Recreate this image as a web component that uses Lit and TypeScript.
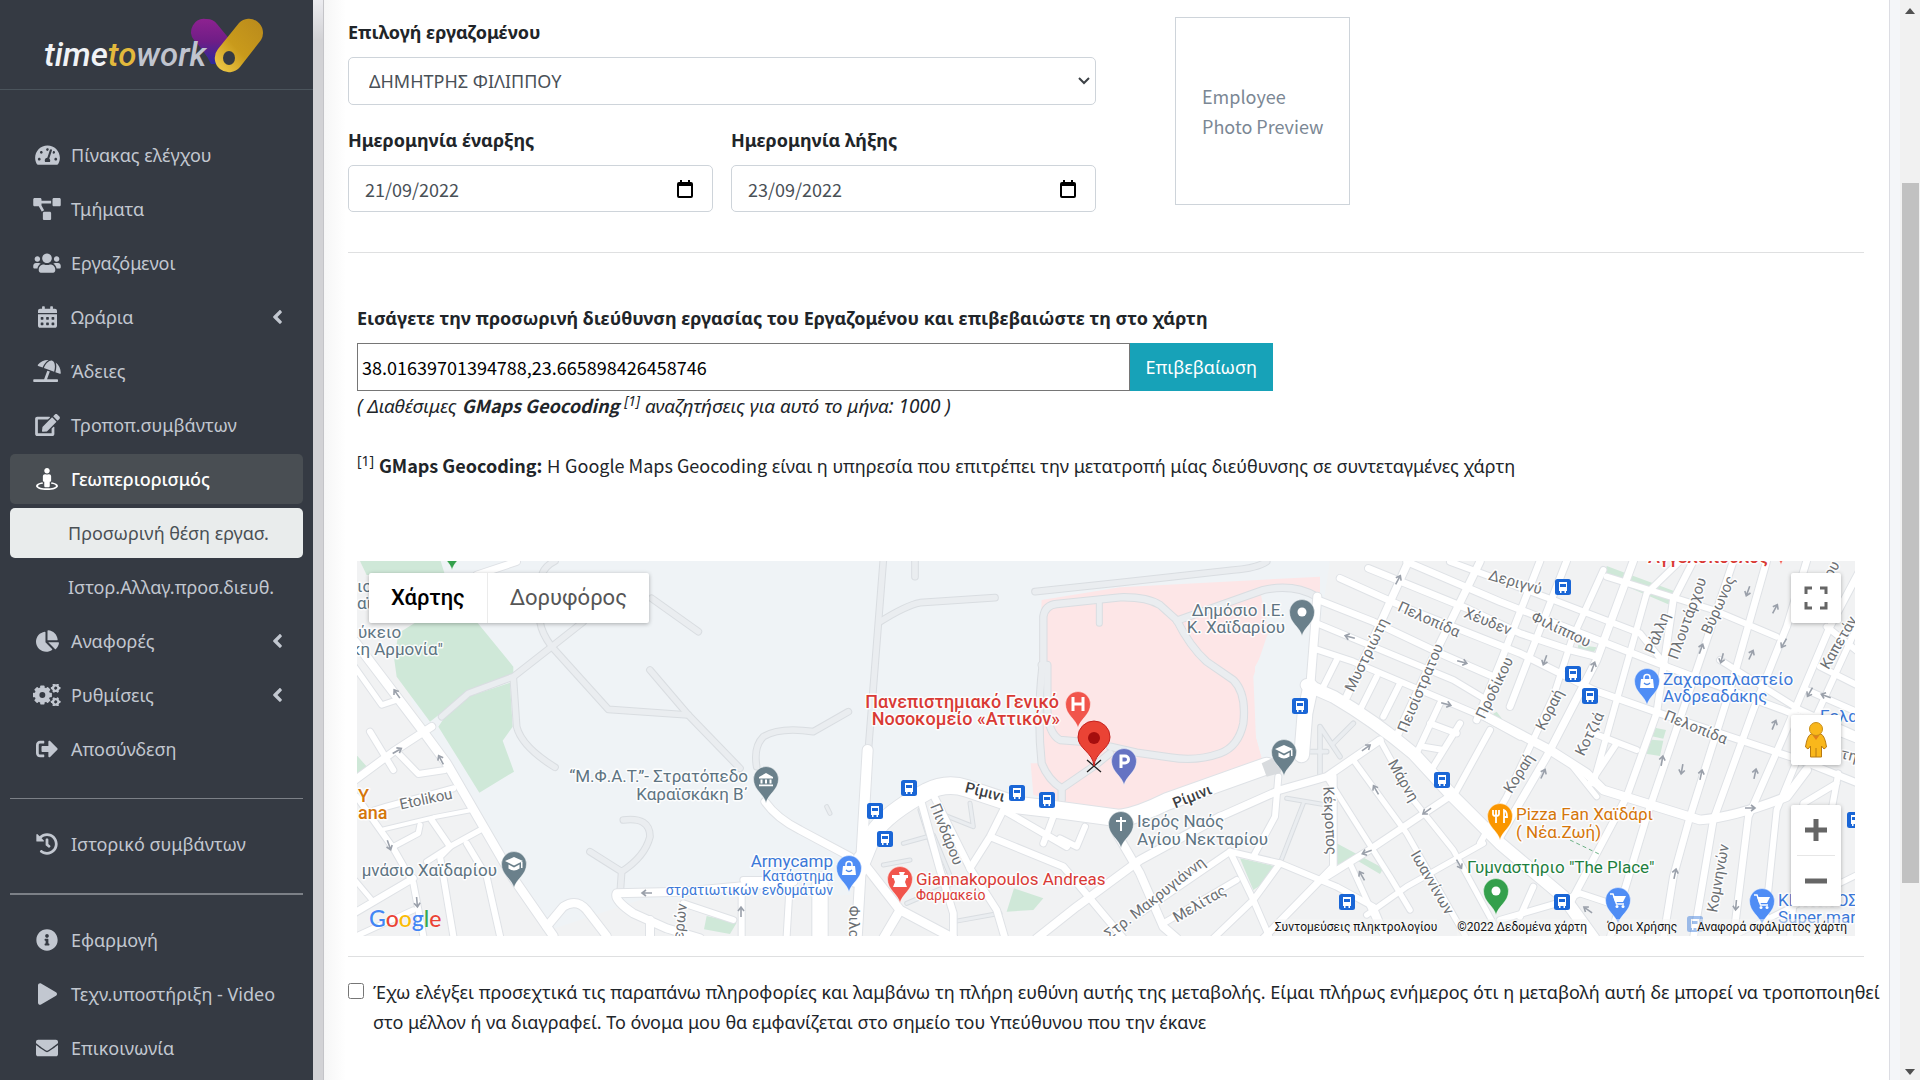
import { LitElement, html, svg, css } from "lit";
import { customElement, state } from "lit/decorators.js";
import { classMap } from "lit/directives/class-map.js";

/* ------------------------------------------------------------------ icons */

type Glyph = { w: number; d: string };

const GLYPHS: Record<string, Glyph> = {
  gauge: { w: 576, d: "M288 32C128.94 32 0 160.94 0 320c0 52.8 14.25 102.26 39.06 144.8 5.61 9.62 16.3 15.2 27.44 15.2h443c11.14 0 21.83-5.58 27.44-15.2C561.75 422.26 576 372.8 576 320c0-159.06-128.94-288-288-288zm0 64c14.71 0 26.58 10.13 30.32 23.65-1.11 2.26-2.64 4.23-3.45 6.67l-9.22 27.67c-5.13 3.49-10.97 6.01-17.64 6.01-17.67 0-32-14.33-32-32S270.33 96 288 96zM96 384c-17.67 0-32-14.33-32-32s14.33-32 32-32 32 14.33 32 32-14.33 32-32 32zm48-160c-17.67 0-32-14.33-32-32s14.33-32 32-32 32 14.33 32 32-14.33 32-32 32zm246.77-72.41l-61.33 184C343.13 347.33 352 364.54 352 384c0 11.72-3.38 22.55-8.88 32H232.88c-5.5-9.45-8.88-20.28-8.88-32 0-33.94 26.5-61.43 59.9-63.59l61.34-184.01c4.17-12.56 17.73-19.45 30.36-15.17 12.57 4.19 19.35 17.79 15.17 30.36zm14.66 57.2l15.52-46.55c3.47-1.29 7.13-2.23 11.05-2.23 17.67 0 32 14.33 32 32s-14.33 32-32 32c-11.38-.01-20.89-6.28-26.57-15.22zM480 384c-17.67 0-32-14.33-32-32s14.33-32 32-32 32 14.33 32 32-14.33 32-32 32z" },
  diagram: { w: 640, d: "M384 320H256c-17.67 0-32 14.33-32 32v128c0 17.67 14.33 32 32 32h128c17.67 0 32-14.33 32-32V352c0-17.67-14.33-32-32-32zM192 32c0-17.67-14.33-32-32-32H32C14.33 0 0 14.33 0 32v128c0 17.67 14.33 32 32 32h95.72l73.16 128.04C211.98 300.98 232.4 288 256 288h.28L192 175.51V128h224V64H192V32zM608 0H480c-17.67 0-32 14.33-32 32v128c0 17.67 14.33 32 32 32h128c17.67 0 32-14.33 32-32V32c0-17.67-14.33-32-32-32z" },
  users: { w: 640, d: "M96 224c35.3 0 64-28.7 64-64s-28.7-64-64-64-64 28.7-64 64 28.7 64 64 64zm448 0c35.3 0 64-28.7 64-64s-28.7-64-64-64-64 28.7-64 64 28.7 64 64 64zm32 32h-64c-17.6 0-33.5 7.1-45.1 18.6 40.3 22.1 68.9 62 75.1 109.4h66c17.7 0 32-14.3 32-32v-32c0-35.3-28.7-64-64-64zm-256 0c61.9 0 112-50.1 112-112S381.9 32 320 32 208 82.1 208 144s50.1 112 112 112zm76.8 32h-8.3c-20.8 10-43.9 16-68.5 16s-47.6-6-68.5-16h-8.3C179.6 288 128 339.6 128 403.2V432c0 26.5 21.5 48 48 48h288c26.5 0 48-21.5 48-48v-28.8c0-63.6-51.6-115.2-115.2-115.2zm-223.7-13.4C161.5 263.1 145.6 256 128 256H64c-35.3 0-64 28.7-64 64v32c0 17.7 14.3 32 32 32h65.9c6.3-47.4 34.9-87.3 75.2-109.4z" },
  calendar: { w: 448, d: "M0 464c0 26.5 21.5 48 48 48h352c26.5 0 48-21.5 48-48V192H0v272zm320-196c0-6.6 5.4-12 12-12h40c6.6 0 12 5.4 12 12v40c0 6.6-5.4 12-12 12h-40c-6.6 0-12-5.4-12-12v-40zm0 128c0-6.6 5.4-12 12-12h40c6.6 0 12 5.4 12 12v40c0 6.6-5.4 12-12 12h-40c-6.6 0-12-5.4-12-12v-40zM192 268c0-6.6 5.4-12 12-12h40c6.6 0 12 5.4 12 12v40c0 6.6-5.4 12-12 12h-40c-6.6 0-12-5.4-12-12v-40zm0 128c0-6.6 5.4-12 12-12h40c6.6 0 12 5.4 12 12v40c0 6.6-5.4 12-12 12h-40c-6.6 0-12-5.4-12-12v-40zM64 268c0-6.6 5.4-12 12-12h40c6.6 0 12 5.4 12 12v40c0 6.6-5.4 12-12 12H76c-6.6 0-12-5.4-12-12v-40zm0 128c0-6.6 5.4-12 12-12h40c6.6 0 12 5.4 12 12v40c0 6.6-5.4 12-12 12H76c-6.6 0-12-5.4-12-12v-40zM400 64h-48V16c0-8.8-7.2-16-16-16h-32c-8.8 0-16 7.2-16 16v48H160V16c0-8.8-7.2-16-16-16h-32c-8.8 0-16 7.2-16 16v48H48C21.5 64 0 85.5 0 112v48h448v-48c0-26.5-21.5-48-48-48z" },
  beach: { w: 640, d: "M115.38 136.9l102.11 37.18c35.19-81.54 86.21-144.29 139-173.7-95.88-4.89-188.78 36.96-248.53 111.8-6.69 8.4-2.66 21.05 7.42 24.72zm132.25 48.16l238.48 86.83c35.76-121.38 18.7-231.66-42.63-253.98-7.4-2.7-15.13-4-23.09-4-58.02.01-128.27 69.17-172.76 171.15zM521.48 60.5c6.22 16.3 10.83 34.6 13.2 55.19 5.74 49.89-1.42 108.23-18.95 166.98l102.62 37.36c10.09 3.67 21.31-3.43 21.57-14.17 2.32-95.69-41.91-187.44-118.44-245.36zM560 447.98H321.06L386 269.5l-60.14-21.9-72.9 200.37H16c-8.84 0-16 7.16-16 16.01v32.01C0 504.83 7.16 512 16 512h544c8.84 0 16-7.17 16-16.01v-32.01c0-8.84-7.16-16-16-16z" },
  edit: { w: 576, d: "M402.6 83.2l90.2 90.2c3.8 3.8 3.8 10 0 13.8L274.4 405.6l-92.8 10.3c-12.4 1.4-22.9-9.1-21.5-21.5l10.3-92.8L388.8 83.2c3.8-3.8 10-3.8 13.8 0zm162-22.9l-48.8-48.8c-15.2-15.2-39.9-15.2-55.2 0l-35.4 35.4c-3.8 3.8-3.8 10 0 13.8l90.2 90.2c3.8 3.8 10 3.8 13.8 0l35.4-35.4c15.2-15.3 15.2-40 0-55.2zM384 346.2V448H64V128h229.8c3.2 0 6.2-1.3 8.5-3.5l40-40c7.6-7.6 2.2-20.5-8.5-20.5H48C21.5 64 0 85.5 0 112v352c0 26.5 21.5 48 48 48h352c26.5 0 48-21.5 48-48V306.2c0-10.7-12.9-16-20.5-8.5l-40 40c-2.2 2.3-3.5 5.3-3.5 8.5z" },
  person: { w: 512, d: "M367.9 329.76c-4.62 5.3-9.78 10.1-15.9 13.65v22.94c66.52 9.34 112 28.05 112 49.65 0 30.93-93.12 56-208 56S48 446.93 48 416c0-21.6 45.48-40.3 112-49.65v-22.94c-6.12-3.55-11.28-8.35-15.9-13.65C58.87 345.34 0 378.05 0 416c0 53.02 114.62 96 256 96s256-42.98 256-96c0-37.95-58.87-70.66-144.1-86.24zM256 128c35.35 0 64-28.65 64-64S291.35 0 256 0s-64 28.65-64 64 28.65 64 64 64zm-64 192v96c0 17.67 14.33 32 32 32h64c17.67 0 32-14.33 32-32v-96c17.67 0 32-14.33 32-32v-96c0-26.51-21.49-48-48-48h-11.8c-11.07 5.03-23.26 8-36.2 8s-25.13-2.97-36.2-8H208c-26.51 0-48 21.49-48 48v96c0 17.67 14.33 32 32 32z" },
  pie: { w: 544, d: "M527.79 288H290.5l158.03 158.03c6.04 6.04 15.98 6.53 22.19.68 38.7-36.46 65.32-85.61 73.13-140.86 1.34-9.46-6.51-17.85-16.06-17.85zm-15.83-64.8C503.72 103.74 408.26 8.28 288.8.04 279.68-.59 272 7.1 272 16.24V240h223.77c9.14 0 16.82-7.68 16.19-16.8zM224 288V50.71c0-9.55-8.39-17.4-17.84-16.06C86.99 51.49-4.1 155.6.14 280.37 4.5 408.51 114.83 513.59 243.03 511.98c50.4-.63 96.97-16.87 135.26-44.03 7.9-5.6 8.42-17.23 1.57-24.08L224 288z" },
  signout: { w: 512, d: "M497 273L329 441c-15 15-41 4.5-41-17v-96H152c-13.3 0-24-10.7-24-24v-96c0-13.3 10.7-24 24-24h136V88c0-21.4 25.9-32 41-17l168 168c9.3 9.4 9.3 24.6 0 34zM192 436v-40c0-6.6-5.4-12-12-12H96c-17.7 0-32-14.3-32-32V160c0-17.7 14.3-32 32-32h84c6.6 0 12-5.4 12-12V76c0-6.6-5.4-12-12-12H96c-53 0-96 43-96 96v192c0 53 43 96 96 96h84c6.6 0 12-5.4 12-12z" },
  history: { w: 512, d: "M504 255.531c.253 136.64-111.18 248.372-247.82 248.468-59.015.042-113.223-20.53-155.822-54.911-11.077-8.94-11.905-25.541-1.839-35.607l11.267-11.267c8.609-8.609 22.353-9.551 31.891-1.984C173.062 425.135 212.781 440 256 440c101.705 0 184-82.311 184-184 0-101.705-82.311-184-184-184-48.814 0-93.149 18.969-126.068 49.932l50.754 50.754c10.08 10.08 2.941 27.314-11.313 27.314H24c-8.837 0-16-7.163-16-16V38.627c0-14.254 17.234-21.393 27.314-11.314l49.372 49.372C129.209 34.136 189.552 8 256 8c136.81 0 247.747 110.78 248 247.531zm-180.912 78.784l9.823-12.63c8.138-10.463 6.253-25.542-4.21-33.679L288 256.349V152c0-13.255-10.745-24-24-24h-16c-13.255 0-24 10.745-24 24v135.651l65.409 50.874c10.463 8.137 25.541 6.253 33.679-4.21z" },
  info: { w: 512, d: "M256 8C119.043 8 8 119.083 8 256c0 136.997 111.043 248 248 248s248-111.003 248-248C504 119.083 392.957 8 256 8zm0 110c23.196 0 42 18.804 42 42s-18.804 42-42 42-42-18.804-42-42 18.804-42 42-42zm56 254c0 6.627-5.373 12-12 12h-88c-6.627 0-12-5.373-12-12v-24c0-6.627 5.373-12 12-12h12v-64h-12c-6.627 0-12-5.373-12-12v-24c0-6.627 5.373-12 12-12h64c6.627 0 12 5.373 12 12v100h12c6.627 0 12 5.373 12 12v24z" },
  play: { w: 448, d: "M424.4 214.7L72.4 6.6C43.8-10.3 0 6.1 0 47.9V464c0 37.5 40.7 60.1 72.4 41.3l352-208c31.4-18.5 31.5-64.1 0-82.6z" },
  envelope: { w: 512, d: "M502.3 190.8c3.9-3.1 9.7-.2 9.7 4.7V400c0 26.5-21.5 48-48 48H48c-26.5 0-48-21.5-48-48V195.6c0-5 5.7-7.8 9.7-4.7 22.4 17.4 52.1 39.5 154.1 113.6 21.1 15.4 56.7 47.8 92.2 47.6 35.7.3 72-32.8 92.3-47.6 102-74.1 131.6-96.3 154-113.7zM256 320c23.2.4 56.6-29.2 73.4-41.4 132.7-96.3 142.8-104.7 173.4-128.7 5.8-4.5 9.2-11.5 9.2-18.9v-19c0-26.5-21.5-48-48-48H48c-26.5 0-48 21.5-48 48v19c0 7.4 3.4 14.3 9.2 18.9 30.6 23.9 40.7 32.4 173.4 128.7 16.8 12.2 50.2 41.8 73.4 41.4z" },
  angle: { w: 256, d: "M31.7 239l136-136c9.4-9.4 24.6-9.4 33.9 0l22.6 22.6c9.4 9.4 9.4 24.6 0 33.9L127.9 256l96.4 96.4c9.4 9.4 9.4 24.6 0 33.9L201.7 409c-9.4 9.4-24.6 9.4-33.9 0l-136-136c-9.5-9.4-9.5-24.6-.1-34z" },
};

/** A cogwheel: a thick ring with `teeth` square teeth around it. */
function gear(cx: number, cy: number, r: number, teeth: number, turn: number) {
  const tooth = r * 0.46;
  return svg`<g transform="translate(${cx} ${cy}) rotate(${turn})">
    <circle r=${r * 0.56} fill="none" stroke="currentColor" stroke-width=${r * 0.5}></circle>
    ${Array.from({ length: teeth }, (_, i) => svg`<rect x=${-tooth / 2} y=${-r} width=${tooth} height=${r * 0.35}
      rx=${r * 0.08} fill="currentColor" transform="rotate(${(i * 360) / teeth})"></rect>`)}
  </g>`;
}

function icon(name: string) {
  if (name === "cogs") {
    return html`<svg class="glyph" width="28" height="22" viewBox="0 0 640 512" aria-hidden="true">
      ${gear(212, 256, 222, 8, 0)}${gear(522, 96, 112, 6, 30)}${gear(522, 416, 112, 6, 30)}
    </svg>`;
  }
  const g = GLYPHS[name];
  return html`<svg class="glyph" width=${Math.round((g.w * 22) / 512)} height="22" viewBox="0 0 ${g.w} 512" aria-hidden="true">
    <path fill="currentColor" d=${g.d}></path>
  </svg>`;
}

/* ---------------------------------------------------------------- sidebar */

type Entry = { label: string; icon?: string; more?: boolean; kind?: "open" | "current" };

const GROUPS: Entry[][] = [
  [
    { label: "Πίνακας ελέγχου", icon: "gauge" },
    { label: "Τμήματα", icon: "diagram" },
    { label: "Εργαζόμενοι", icon: "users" },
    { label: "Ωράρια", icon: "calendar", more: true },
    { label: "Άδειες", icon: "beach" },
    { label: "Τροποπ.συμβάντων", icon: "edit" },
    { label: "Γεωπεριορισμός", icon: "person", kind: "open" },
    { label: "Προσωρινή θέση εργασ.", kind: "current" },
    { label: "Ιστορ.Αλλαγ.προσ.διευθ." },
    { label: "Αναφορές", icon: "pie", more: true },
    { label: "Ρυθμίσεις", icon: "cogs", more: true },
    { label: "Αποσύνδεση", icon: "signout" },
  ],
  [{ label: "Ιστορικό συμβάντων", icon: "history" }],
  [
    { label: "Εφαρμογή", icon: "info" },
    { label: "Τεχν.υποστήριξη - Video", icon: "play" },
    { label: "Επικοινωνία", icon: "envelope" },
  ],
];

@customElement("side-nav")
class SideNav extends LitElement {
  static styles = css`
    :host { display: block; background: #353a43; color: #c2c7d0; }
    .brand { display: block; height: 89px; border-bottom: 1px solid #4b545c; }
    .brand svg { display: block; }
    .word { font: italic 500 33px "Roboto", "Liberation Sans", sans-serif; }
    nav { padding: 40px 10px 6px; }
    ul { list-style: none; margin: 0; padding: 0; }
    ul + ul { border-top: 1px solid #7c8087; margin-top: 24px; padding-top: 20px; }
    ul + ul + ul { border-top-width: 2px; }
    li { margin-bottom: 4px; }
    nav a {
      display: flex; align-items: center; height: 50px; padding: 0 20px 0 18px; border-radius: 5px;
      color: inherit; text-decoration: none; line-height: 30px; white-space: nowrap; box-sizing: border-box;
    }
    .slot { width: 38px; margin-right: 5px; display: flex; justify-content: center; }
    .label { flex: 1; }
    nav .sub { padding-left: 58px; padding-right: 0; }
    nav .open { background: #494e53; color: #fff; font-weight: 500; }
    nav .current { background: #e9ecec; color: #4a5055; }
  `;

  render() {
    return html`
      <a class="brand" href="#home" aria-label="timetowork">
        <svg width="312" height="89" viewBox="0 0 312 89">
          <defs>
            <linearGradient id="violet" x1="0" y1="0" x2="0" y2="1">
              <stop offset="0" stop-color="#8d2290"></stop><stop offset="0.5" stop-color="#6f1d86"></stop><stop offset="1" stop-color="#2b2a9c"></stop>
            </linearGradient>
            <linearGradient id="gold" x1="1" y1="0" x2="0" y2="1">
              <stop offset="0" stop-color="#b98a1c"></stop><stop offset="0.55" stop-color="#c99a1b"></stop><stop offset="1" stop-color="#f3cf4e"></stop>
            </linearGradient>
          </defs>
          <path d="M206 19a13 13 0 0 1 11 5l14 17-13 23h-7c-4-9-10-16-17-24a13 13 0 0 1 12-21z" fill="url(#violet)"></path>
          <path fill="url(#gold)" d="M218 49l21-26a14 14 0 0 1 22 17l-21 27a14 14 0 0 1-22-18z"></path>
          <ellipse cx="229" cy="58" rx="6" ry="7" fill="#353a43"></ellipse>
          <text class="word" x="44" y="66" fill="#f1f3f6">time<tspan fill="#e3b93c">to</tspan><tspan fill="#c0c4ce">work</tspan></text>
        </svg>
      </a>
      <nav aria-label="Κύριο μενού">
        ${GROUPS.map((group) => html`<ul>${group.map((e) => html`<li>
          <a href="#" class=${classMap({ sub: !e.icon, open: e.kind === "open", current: e.kind === "current" })}>
            ${e.icon ? html`<span class="slot">${icon(e.icon)}</span>` : ""}
            <span class="label">${e.label}</span>
            ${e.more ? icon("angle") : ""}
          </a></li>`)}</ul>`)}
      </nav>`;
  }
}

/* -------------------------------------------------------------------- map */

/* Street geometry is kept in four tiles, in thirds of a map unit. */
const TILE: Record<string, string> = {
  a: "translate(350 550) scale(.33333)",
  b: "translate(740 550) scale(.33333)",
  c: "translate(1120 550) scale(.33333)",
  d: "translate(1500 550) scale(.33333)",
};

type Road = [tile: string, width: number, d: string];

const PATHS: Road[] = [
  ["a", 20, "M700 215L605 290L490 380L355 430L275 500"],
  ["a", 20, "M570 215Q575 250 605 290L775 478L1015 495"],
  ["a", 20, "M900 360L1015 495L1170 655"],
  ["a", 20, "M490 385L500 530Q515 590 615 652"],
  ["a", 20, "M905 145L1045 245"],
  ["a", 20, "M575 80Q580 50 615 33"],
  ["a", 20, "M820 810Q900 800 900 860Q885 920 815 965L720 905M815 965L810 1035"],
  ["b", 20, "M430 30L415 220L385 600"],
  ["b", 20, "M420 215Q500 165 540 158L765 143"],
  ["b", 20, "M885 125L1140 98L1480 60Q1550 55 1580 35"],
  ["b", 20, "M525 33V80"],
  ["b", 20, "M50 650Q40 590 70 560Q120 530 220 545L325 485"],
  ["b", 22, "M910 345L910 200Q915 165 950 162L1140 142Q1220 140 1260 165L1310 210Q1350 290 1400 335L1480 390Q1520 430 1510 520Q1495 590 1440 610Q1370 635 1290 622L1190 608L1110 590"],
  ["b", 22, "M1020 575L960 570Q925 550 922 480V345H905"],
  ["b", 22, "M908 345Q890 500 905 640Q925 690 965 715L1060 650L1110 610M965 715V750"],
  ["b", 18, "M1078 158V220"],
  ["c", 22, "M170 212L430 120Q520 100 590 140"],
  ["c", 14, "M600 690L600 530L660 620M570 605H620M640 580L700 520"],
  ["c", 12, "M500 745L620 765M550 760L480 940"],
  ["b", 12, "M430 945L510 930M600 790L700 830L690 760M490 880L580 855L640 1000L500 1060M540 780L600 970M640 1115L780 1090M260 770L270 790"],
];

const STREETS: Road[] = [
  ["a", 26, "M15 275L220 545L290 640L400 830L490 985L610 1158"],
  ["a", 16, "M10 345L95 465L140 450"],
  ["a", 22, "M15 690L130 605L245 530"],
  ["a", 18, "M60 545L130 660"],
  ["a", 18, "M145 610L205 672L285 660"],
  ["a", 18, "M45 790L110 770L310 715"],
  ["a", 12, "M100 838L250 802L365 780"],
  ["a", 18, "M20 740L130 895L190 1000L220 1158"],
  ["a", 16, "M130 890L205 850L210 825"],
  ["a", 18, "M245 810L300 890L270 920L310 1158"],
  ["a", 16, "M400 835L300 890L230 935"],
  ["a", 18, "M350 880L410 980L450 1158"],
  ["a", 20, "M15 1088L190 985"],
  ["a", 14, "M15 990L70 1055"],
  ["a", 16, "M15 1160L190 1080"],
  ["a", 24, "M590 1130L640 1070Q680 1045 710 1080L770 1158"],
  ["a", 24, "M1330 995L1000 1025L800 1030Q790 1050 850 1090L950 1135L1050 1165M900 1110V1158"],
  ["a", 18, "M1000 1060L1150 1110M1175 1020V1158"],
  ["a", 20, "M380 75L500 35"],
  ["b", 30, "M383 600L350 1165"],
  ["b", 22, "M75 755Q110 805 180 840L330 920"],
  ["b", 50, "M345 985Q380 900 400 850Q440 790 560 725Q620 695 680 715L830 765L940 778L1140 805Q1200 795 1280 755L1580 648"],
  ["b", 26, "M355 920L480 1080L640 1165M480 1080L430 1165"],
  ["b", 20, "M580 735L690 955L770 1080L795 1165"],
  ["b", 20, "M600 960L640 1090V1165M545 760L600 960"],
  ["b", 20, "M690 955L750 860L790 780L980 890M750 860L970 950L1150 1165"],
  ["b", 18, "M940 800L910 880M960 865L1010 890L1035 830"],
  ["b", 24, "M1130 850L1200 970L1270 1130L1310 1165"],
  ["b", 24, "M1440 800L1200 930L1010 1070L890 1165"],
  ["b", 46, "M240 990V1165"],
  ["b", 18, "M10 990H150L140 1158"],
  ["c", 44, "M545 615L555 490L572 410"],
  ["c", 24, "M570 420L592 140"],
  ["c", 36, "M560 405L640 440Q760 510 880 610L1000 740L1140 880L1330 1040L1420 1165"],
  ["c", 22, "M300 800L480 720L620 680L780 570"],
  ["c", 18, "M475 680L465 800L400 920"],
  ["c", 20, "M640 680V950L430 1165"],
  ["c", 18, "M330 905L480 940L650 1010L760 1070L800 1165"],
  ["c", 18, "M330 905L400 1050L450 1165M480 940L400 1050L280 1165M330 905L60 1090M350 990L130 1120"],
  ["c", 20, "M620 980L740 905L980 745"],
  ["c", 16, "M700 630L860 850L1040 1165M620 680L810 980L870 1080M780 570L880 750L1000 900L1120 1120"],
  ["c", 16, "M740 1095L860 1010L1090 880M690 940L790 1158"],
  ["c", 20, "M860 35L1140 155L1640 350L1990 480L2215 570"],
  ["c", 20, "M745 55L1040 175L1200 250L1350 300L1430 320"],
  ["c", 20, "M660 85L860 175L1200 310L1420 420L1620 490L2040 630L2215 700"],
  ["c", 20, "M595 150L760 215L960 310L1120 380"],
  ["c", 18, "M590 220L1000 390L1100 450"],
  ["c", 18, "M580 295L700 335L1100 505L1200 560"],
  ["c", 18, "M990 35L1300 150L1560 250L1640 350"],
  ["c", 26, "M1100 500L1290 600L1400 670L1450 720L1740 810Q1850 800 2000 740L2060 660"],
  ["c", 18, "M610 410L650 330M720 480L770 380M790 500L840 400M890 610L960 460M940 650L1020 520M1000 740L1110 540M930 520L1010 550M910 590L970 600"],
  ["c", 22, "M680 440L740 310L865 35"],
  ["c", 22, "M830 560L960 280L1080 35"],
  ["c", 20, "M1070 510L1140 340L1260 33"],
  ["d", 20, "M30 470L80 340L200 33"],
  ["d", 18, "M-60 880L20 740L160 440L215 270L310 60"],
  ["d", 22, "M0 860L140 620L290 330L400 33"],
  ["d", 18, "M280 700L440 130L540 33M350 580L270 700"],
  ["d", 20, "M210 1060L380 740L470 490L520 150L580 33"],
  ["d", 20, "M330 1165L440 800L600 330L700 33"],
  ["d", 20, "M490 1165L520 980L570 800L690 420L800 33"],
  ["d", 20, "M580 1165L640 810L760 480L860 230L920 33"],
  ["d", 20, "M700 1165L745 800L850 560L990 230L1080 60"],
  ["d", 18, "M790 1165L830 780L920 560L1080 210"],
  ["d", 18, "M870 1165L910 760L1010 700M1015 670L980 860"],
  ["d", 18, "M320 80L640 180L830 260"],
  ["d", 18, "M660 330L900 480L1080 560M920 420L1080 490M980 230L1080 310M960 350L1080 410"],
  ["d", 18, "M280 550L410 600M0 1110L170 1060L240 1030L330 1060M100 1010L60 1100"],
  ["d", 16, "M210 640L290 740M700 1158L1080 970"],
];

const GREENS: [string, string][] = [
  ["a", "30,33 272,33 285,75 50,75"],
  ["a", "200,215 380,215 490,350 490,378 355,425 240,515 140,380 133,330 145,250"],
  ["a", "265,530 285,500 360,438 480,398 488,530 458,572 492,665 388,728"],
  ["a", "15,610 55,655 15,695"],
  ["a", "1070,1098 1160,1118 1140,1152 1062,1138"],
  ["b", "822,1015 910,1045 880,1080 800,1085"],
  ["c", "650,880 790,955 780,972 700,925 650,945"],
  ["c", "360,925 470,950 430,1000 400,1020"],
  ["c", "1105,500 1130,485 1160,525 1140,535"],
  ["d", "320,48 540,130 510,165 315,82"],
  ["d", "235,285 290,292 275,318 232,300"],
  ["d", "440,568 490,572 480,618 428,610"],
  ["d", "450,530 498,540 490,566 442,556"],
];

type Label = [text: string, x: number, y: number, kind: string, turn?: number];

const LABELS: Label[] = [
  ["ιο", 357, 592, "poi grey"],
  ["αϊ", 357, 609, "poi grey"],
  ["ύκειο", 358, 638, "poi grey"],
  ["κη Αρμονία\"", 443, 655, "poi grey end"],
  ["Y", 358, 802, "bold orange"],
  ["ana", 358, 819, "bold orange"],
  ["μνάσιο Χαϊδαρίου", 497, 876, "poi grey end"],
  ["“Μ.Φ.Α.Τ.”- Στρατόπεδο", 748, 782, "poi grey end"],
  ["Καραϊσκάκη Β΄", 748, 800, "poi grey end"],
  ["Armycamp", 833, 867, "poi blue end"],
  ["Κατάστημα", 833, 881, "small blue end"],
  ["στρατιωτικών ενδυμάτων", 833, 895, "small blue end"],
  ["Giannakopoulos Andreas", 916, 885, "poi red"],
  ["Φαρμακείο", 916, 900, "small red"],
  ["Πανεπιστημιακό Γενικό", 1059, 708, "bold red end"],
  ["Νοσοκομείο «Αττικόν»", 1060, 725, "bold red end"],
  ["Δημόσιο Ι.Ε.", 1285, 616, "poi grey end"],
  ["Κ. Χαϊδαρίου", 1285, 633, "poi grey end"],
  ["Ιερός Ναός", 1137, 827, "poi grey"],
  ["Αγίου Νεκταρίου", 1137, 845, "poi grey"],
  ["Pizza Fan Χαϊδάρι", 1516, 820, "poi orange"],
  ["( Νέα.Ζωή)", 1516, 838, "poi orange"],
  ["Γυμναστήριο \"The Place\"", 1467, 873, "poi green"],
  ["Ζαχαροπλαστείο", 1663, 685, "poi blue"],
  ["Ανδρεαδάκης", 1663, 702, "poi blue"],
  ["Εελα", 1820, 722, "poi blue"],
  ["ΚΡΗΤΙΚΟΣ", 1778, 906, "poi blue"],
  ["Super mar", 1778, 923, "poi blue"],
  ["Αγγελόπουλος", 1648, 563, "bold red"],
  ["Etolikou", 427, 804, "street mid", -12],
  ["Ρίμινι", 984, 797, "street mid dark", 14],
  ["Ρίμινι", 1194, 801, "street mid dark", -22],
  ["Πινδάρου", 942, 836, "street mid", 68],
  ["Φιλο", 849, 922, "street mid", 90],
  ["ερών", 685, 922, "street mid", -84],
  ["Στρ. Μακρυγιάννη", 1158, 902, "street mid", -38],
  ["Μελίτας", 1202, 908, "street mid", -30],
  ["Κέκροπος", 1325, 821, "street mid", 87],
  ["Μάρνη", 1399, 783, "street mid", 60],
  ["Ιωαννίνων", 1428, 885, "street mid", 60],
  ["Μυστριώτη", 1371, 657, "street mid", -64],
  ["Πεισίστρατου", 1425, 690, "street mid", -67],
  ["Προδίκου", 1499, 690, "street mid", -64],
  ["Πελοπίδα", 1427, 624, "street mid", 24],
  ["Χέυδεν", 1486, 626, "street mid", 22],
  ["Δεριγνύ", 1514, 587, "street mid", 16],
  ["Φιλίππου", 1559, 634, "street mid", 25],
  ["Ράλλη", 1662, 635, "street mid", -68],
  ["Πλουτάρχου", 1692, 620, "street mid", -70],
  ["Βύρωνος", 1723, 607, "street mid", -66],
  ["Καπετάν", 1843, 645, "street mid", -60],
  ["ου", 1836, 572, "street mid", -60],
  ["Κοραή", 1554, 712, "street mid", -63],
  ["Κοτζιά", 1594, 736, "street mid", -64],
  ["Κοραή", 1523, 776, "street mid", -58],
  ["Πελοπίδα", 1694, 732, "street mid", 22],
  ["τη", 1848, 760, "street mid", 14],
  ["Κομνηνών", 1723, 879, "street mid", -80],
];

const STOPS: [number, number][] = [
  [909, 788], [875, 811], [885, 839], [1017, 793], [1047, 800], [1300, 706], [1442, 780],
  [1347, 902], [1563, 587], [1573, 674], [1590, 696], [1562, 902], [1855, 820],
];

const ARROWS: [number, number, number][] = [
  [397, 694, -35], [397, 751, 60], [441, 760, -28], [389, 845, 160], [417, 902, 175], [647, 893, -90],
  [741, 912, 0], [1350, 637, -75], [1462, 662, 105], [1446, 704, 105], [1398, 580, 28], [1376, 790, -30],
  [1366, 748, 55], [1427, 811, 235], [1367, 852, 250], [1362, 876, -30], [1459, 864, 150], [1748, 591, 200],
  [1775, 609, 28], [1784, 643, 210], [1701, 649, 20], [1722, 658, 195], [1751, 655, 25], [1545, 660, 200],
  [1593, 667, 20], [1774, 725, 22], [1810, 692, 210], [1826, 696, -70], [1662, 761, 10], [1682, 769, 190],
  [1701, 775, 12], [1755, 774, 12], [1750, 808, 90], [1543, 774, 25], [1675, 874, 12], [1736, 905, 185],
  [1588, 910, -55],
];

const symbols = {
  school: svg`<path d="M0-31l9 4-9 4.500-9-4.500zM-5.500-23.500v4q5.500 4 11 0v-4l-5.500 3zM7-26h1.500v6H7z" fill="#fff"></path>`,
  museum: svg`<path d="M0-30l7 4v1.500H-7V-26zM-5.500-23.500h2v4h-2zM-1-23.500h2v4h-2zM3.500-23.500h2v4h-2zM-7-18.500H7v1.800H-7z" fill="#fff"></path>`,
  bag: svg`<path d="M-6-26H6l1 9H-7z" fill="#fff"></path><path d="M-3-26v-1.500a3 3 0 0 1 6 0V-26" fill="none" stroke="#fff" stroke-width="1.500"></path><path d="M-3-22q3 3 6 0" fill="none" stroke="#4a86e8" stroke-width="1.300"></path>`,
  mortar: svg`<path d="M-8-28H8v3H6.500l-1.500 4 2 5H-7l2-5-1.500-4H-8zM-1-31h6l-2 4h-3z" fill="#fff"></path>`,
  cross: svg`<path d="M0-31v14M-5-27H5" stroke="#fff" stroke-width="2"></path>`,
  dot: svg`<circle cy="-24" r="4.500" fill="#fff"></circle>`,
  fork: svg`<path d="M-4-30v13M-7-30v4q0 2 3 2t3-2v-4M4-17v-13q3 1 3 7H4" fill="none" stroke="#fff" stroke-width="1.800"></path>`,
  cart: svg`<path d="M-5-28H8l-3 6H-3z" fill="#fff"></path><path d="M-8-30h3l3.500 10H6" fill="none" stroke="#fff" stroke-width="1.400"></path><circle cx="-1" cy="-17.500" r="1.500" fill="#fff"></circle><circle cx="5" cy="-17.500" r="1.500" fill="#fff"></circle>`,
  hospital: svg`<path d="M-5-31v14M5-31v14M-5-24H5" stroke="#fff" stroke-width="3"></path>`,
  parking: svg`<path d="M-3-17v-12H1a3.500 3.500 0 0 1 0 7h-4" fill="none" stroke="#fff" stroke-width="3"></path>`,
};

const PINS: [number, number, string, keyof typeof symbols][] = [
  [514, 888, "#6a808b", "school"], [766, 803, "#6a808b", "museum"], [849, 892, "#4f8df5", "bag"],
  [900, 903, "#f1554c", "mortar"], [1078, 728, "#f1554c", "hospital"], [1124, 785, "#6573c3", "parking"],
  [1121, 848, "#6a808b", "cross"], [1302, 636, "#6a808b", "dot"], [1284, 776, "#6a808b", "school"],
  [1500, 840, "#fa9600", "fork"], [1496, 915, "#34a04c", "dot"], [1647, 705, "#4f8df5", "bag"],
  [1618, 924, "#4f8df5", "cart"], [1762, 925, "#4f8df5", "cart"], [452, 570, "#34a04c", "dot"],
  [1781, 565, "#f1554c", "dot"],
];

@customElement("work-map")
class WorkMap extends LitElement {
  @state() private view = "map";

  static styles = css`
    :host { display: block; position: relative; height: 375px; overflow: hidden; background: #f1f2f4; font-family: "Roboto", "Liberation Sans", sans-serif; }
    .canvas { display: block; width: 100%; height: 100%; }
    .case { fill: none; stroke: #dfe2e6; stroke-linejoin: round; stroke-linecap: round; }
    .street { fill: none; stroke: #fff; stroke-linejoin: round; stroke-linecap: round; }
    .path { fill: none; stroke: #eaedf0; stroke-linejoin: round; stroke-linecap: round; }
    .pathcase { fill: none; stroke: #d9dde1; stroke-linejoin: round; stroke-linecap: round; }
    text { paint-order: stroke; stroke: #fff; stroke-width: 3px; stroke-opacity: .85; stroke-linejoin: round; }
    .poi { font-size: 17px; }
    .bold { font-size: 18px; font-weight: 500; }
    .small { font-size: 14px; }
    .name { font-size: 15px; fill: #6b6f73; }
    .end { text-anchor: end; }
    .mid { text-anchor: middle; }
    .grey { fill: #5e7482; }
    .blue { fill: #3b78d8; }
    .red { fill: #d93a35; }
    .orange { fill: #d5760a; }
    .green { fill: #1e8040; }
    .dark { fill: #3c4043; font-weight: 500; }
    .types, .tool, .zoom, .legal, .google { position: absolute; }
    .types, .tool, .zoom { background: #fff; box-shadow: 0 1px 4px rgba(0, 0, 0, .3); border-radius: 2px; }
    .types { left: 12px; top: 12px; display: flex; height: 50px; }
    button { border: 0; padding: 0; background: none; font: inherit; cursor: pointer; }
    .types button { padding: 0 22px; font-size: 22px; color: #565656; }
    .types .on { color: #000; font-weight: 500; border-right: 1px solid #ebebeb; }
    .tool, .zoom { right: 14px; width: 50px; }
    .tool button, .zoom button { width: 50px; height: 50px; display: grid; place-items: center; }
    .full { top: 12px; }
    .peg { top: 154px; }
    .zoom { top: 244px; }
    .zoom hr { margin: 0 6px; border: 0; border-top: 1px solid #e6e6e6; }
    .google { left: 12px; bottom: 1px; font: 500 23px/34px "Lato", "Liberation Sans", sans-serif; text-decoration: none; text-shadow: 0 0 2px #fff; }
    .g1 { color: #4285f4; } .g2 { color: #ea4335; } .g3 { color: #fbbc04; } .g4 { color: #34a853; }
    .legal { right: 8px; bottom: 0; display: flex; gap: 20px; font-size: 12px; line-height: 17px; }
    .legal a, .legal button, .legal span { color: #111; text-decoration: none; text-shadow: 0 0 2px #fff, 0 0 3px #fff; background: rgba(245, 245, 245, .5); }
  `;

  private line(r: Road, cls: string, extra: number) {
    return svg`<path class=${cls} transform=${TILE[r[0]]} stroke-width=${r[1] + extra} d=${r[2]}></path>`;
  }

  private stop(x: number, y: number, opacity: number) {
    return svg`<g transform="translate(${x} ${y})" opacity=${opacity}>
      <rect x="-8" y="-8" width="16" height="16" rx="2.500" fill="#1a66d6"></rect>
      <path d="M-4-5H4V4H3V6H1.500V4H-1.500V6H-3V4H-4z" fill="#fff"></path>
      <path d="M-3-3H3V0H-3z" fill="#1a66d6"></path>
    </g>`;
  }

  render() {
    return html`
      <svg class="canvas" viewBox="357 561 1498 375" preserveAspectRatio="xMidYMid slice" role="img" aria-label="Χάρτης Χαϊδαρίου">
        <rect x="0" y="500" width="2300" height="500" fill="#f1f2f3"></rect>
        <path d="M430 561H1330L1310 690L1270 770L1120 815L945 785L870 840L850 895L640 900L550 930L500 850L410 700L480 640z" fill="#eff3f6"></path>
        <path transform=${TILE.b} fill="#fde6e7" d="M905 150L1140 112L1740 80V130L1660 108L1560 120L1590 270L1545 350L1548 560L1570 640L1300 725L1140 800L970 755L880 735L872 640L905 640L895 400z"></path>
        <path transform=${TILE.b} fill="#eff3f6" d="M1630 150L1735 150L1715 400L1690 600L1600 640L1570 640L1548 560L1540 380L1580 260z"></path>
        ${GREENS.map(([t, p]) => svg`<polygon transform=${TILE[t]} points=${p} fill="#cfe8d8"></polygon>`)}
        ${PATHS.map((r) => this.line(r, "pathcase", 3))}
        ${PATHS.map((r) => this.line(r, "path", -3))}
        ${STREETS.map((r) => this.line(r, "case", 6))}
        ${STREETS.map((r) => this.line(r, "street", 0))}
        <path transform=${TILE.c} d="M425 640L475 615L500 640L480 670L440 680z" fill="#d8dbde"></path>
        <path d="M1570 840L1599 854" stroke="#6db286" stroke-dasharray="4 3"></path>
        ${ARROWS.map(([x, y, a]) => svg`<path transform="translate(${x} ${y}) rotate(${a})" d="M0 5V-4M-3-1L0-5L3-1" fill="none" stroke="#9aa0aa" stroke-width="1.600"></path>`)}
        ${STOPS.map(([x, y]) => this.stop(x, y, 1))}
        ${this.stop(1695, 924, 0.4)}
        ${LABELS.map(([t, x, y, k, a]) => svg`<text class=${k.replace("street", "name")} x=${x} y=${y}
          transform=${`rotate(${a ?? 0} ${x} ${y})`}>${t}</text>`)}
        ${PINS.map(([x, y, c, s]) => svg`<g transform="translate(${x} ${y})">
          <path d="M0 0C-2-9-12.500-13-12.500-24a12.500 12.500 0 0 1 25 0C12.500-13 2-9 0 0z" fill=${c} stroke="#fff" stroke-opacity=".6" stroke-width=".8"></path>
          ${symbols[s]}
        </g>`)}
        <path d="M1087 760l14 12M1101 760l-14 12" stroke="#222" stroke-width="1.300"></path>
        <path d="M1094 766C1093 752 1078 749 1078 737a16 16 0 0 1 32 0C1110 749 1095 752 1094 766z" fill="#ea4335" stroke="#c5221f" stroke-width="1"></path>
        <circle cx="1094" cy="738" r="6" fill="#a50e0e"></circle>
      </svg>
      <div class="types">
        <button class=${classMap({ on: this.view === "map" })} @click=${() => (this.view = "map")}>Χάρτης</button>
        <button class=${classMap({ on: this.view === "sat" })} @click=${() => (this.view = "sat")}>Δορυφόρος</button>
      </div>
      <div class="tool full"><button aria-label="Πλήρης οθόνη">
        <svg width="24" height="24" viewBox="0 0 24 24"><path d="M2 8V2H8M16 2H22V8M22 16V22H16M8 22H2V16" fill="none" stroke="#666" stroke-width="3"></path></svg>
      </button></div>
      <div class="tool peg"><button aria-label="Street View">
        <svg width="24" height="38" viewBox="0 0 24 38">
          <path d="M7 13Q3 15 1.500 26L4 28L6.500 25V36H17.500V25L20 28L22.500 26Q21 15 17 13z" fill="#f9b71b" stroke="#b87a12" stroke-width="1"></path>
          <path d="M8 13.500L12 19L16 13.500z" fill="#e07f1c"></path>
          <path d="M12 27V36" stroke="#b87a12"></path>
          <circle cx="12" cy="8" r="6.500" fill="#f9b71b" stroke="#c98f1a"></circle>
        </svg>
      </button></div>
      <div class="zoom">
        <button aria-label="Μεγέθυνση"><svg width="24" height="24" viewBox="0 0 24 24"><path d="M12 1V23M1 12H23" stroke="#666" stroke-width="5"></path></svg></button>
        <hr />
        <button aria-label="Σμίκρυνση"><svg width="24" height="24" viewBox="0 0 24 24"><path d="M1 12H23" stroke="#666" stroke-width="5"></path></svg></button>
      </div>
      <a class="google" href="#maps"><span class="g1">G</span><span class="g2">o</span><span class="g3">o</span><span class="g1">g</span><span class="g4">l</span><span class="g2">e</span></a>
      <div class="legal">
        <button>Συντομεύσεις πληκτρολογίου</button>
        <span>©2022 Δεδομένα χάρτη</span>
        <a href="#terms">Όροι Χρήσης</a>
        <a href="#report">Αναφορά σφάλματος χάρτη</a>
      </div>`;
  }
}

/* ------------------------------------------------------------------- page */

@customElement("app-root")
class AppRoot extends LitElement {
  static styles = css`
    :host { display: block; font-family: "Noto Sans", "Open Sans", sans-serif; font-size: 18px; line-height: 30px; color: #212529; }
    .latin, .date input, .geo input { font-family: "Noto Sans CJK JP", "Noto Sans", sans-serif; }
    .shell { display: flex; min-height: 100vh; background: #f4f6f9; }
    side-nav { flex: 0 0 313px; min-width: 0; }
    .gutter { flex: 0 0 10px; background: linear-gradient(#ececf0, #d2d2d5 40px); border-right: 1px solid #c4c4c8; }
    main {
      flex: 1; min-width: 0; box-sizing: border-box; padding: 17px 25px 17px 24px; border-right: 1px solid #dcdde3;
      background: linear-gradient(90deg, #f6f6f6, #fff 22px);
    }
    .scroll { flex: 0 0 20px; margin-left: 10px; background: #f1f1f1; display: flex; flex-direction: column; align-items: center; }
    .scroll svg { margin: 6px 0; }
    .thumb { width: 17px; height: 700px; background: #c1c1c1; margin-top: 161px; }
    .grow { flex: 1; }
    .two { display: grid; grid-template-columns: 1fr 1fr; gap: 20px; align-items: start; }
    .dates { display: grid; grid-template-columns: 1fr 1fr; gap: 18px; margin-top: 20px; }
    label { display: block; font-weight: 700; margin-bottom: 10px; }
    select, .geo input, .geo button { font-size: 18px; line-height: 30px; box-sizing: border-box; height: 48px; width: 100%; }
    .pick { display: grid; align-items: center; }
    .pick select, .pick svg { grid-area: 1 / 1; }
    .pick svg { justify-self: end; margin-right: 6px; pointer-events: none; }
    select { appearance: none; border: 1px solid #ced4da; border-radius: 5px; background: #fff; color: #495057; font-family: inherit; padding: 0 30px 0 20px; }
    .date { box-sizing: border-box; height: 47px; display: flex; align-items: center; border: 1px solid #ced4da; border-radius: 5px; padding: 0 18px 0 16px; }
    .date input { flex: 1; min-width: 0; border: 0; padding: 0; background: none; font-size: 18px; line-height: 28px; color: #495057; }
    .date button { border: 0; background: none; padding: 0; display: flex; }
    .photo {
      box-sizing: border-box; width: 175px; height: 188px; margin-left: 59px; border: 1px solid #ced4da;
      display: flex; align-items: center; padding: 0 0 0 26px; color: #7b8794;
    }
    hr { border: 0; border-top: 1px solid #dfe0e1; margin: 0; }
    .rule { margin-top: 40px; }
    .section { padding: 50px 9px 20px; }
    .geo { display: flex; width: min(100%, 916px); }
    .geo input { flex: 1; min-width: 0; border: 1px solid #767676; padding: 0 4px; color: #000; }
    .geo button { width: auto; border: 0; padding: 0 16px; background: #17a2b8; color: #fff; font-family: inherit; }
    p { margin: 0; }
    p .latin { line-height: 0; }
    .quota { font-style: italic; font-size: 19px; }
    .quota .latin { font-size: 18px; }
    sup { font-size: 14px; line-height: 0; }
    .note { margin: 30px 0 80px; }
    .agree { display: flex; align-items: flex-start; gap: 9px; padding-top: 20px; margin-right: -20px; }
    .agree input { margin: 6px 0 0; width: 16px; height: 16px; flex: none; }
    .agree label { font-weight: 400; margin: 0; }
  `;

  private dateField(id: string, label: string, value: string) {
    return html`<div>
      <label for=${id}>${label}</label>
      <div class="date">
        <input id=${id} type="text" inputmode="numeric" .value=${value} />
        <button aria-label="Άνοιγμα ημερολογίου">
          <svg width="18" height="18" viewBox="0 0 18 18"><path fill="#000" fill-rule="evenodd" d="M4 0h2v2h6V0h2v2h1a2 2 0 0 1 2 2v12a2 2 0 0 1-2 2H3a2 2 0 0 1-2-2V4a2 2 0 0 1 2-2h1zM3 6v10h12V6z"></path></svg>
        </button>
      </div>
    </div>`;
  }

  render() {
    return html`<div class="shell">
      <side-nav></side-nav>
      <div class="gutter"></div>
      <main>
        <div class="two">
          <div>
            <label for="employee">Επιλογή εργαζομένου</label>
            <div class="pick">
              <select id="employee"><option>ΔΗΜΗΤΡΗΣ ΦΙΛΙΠΠΟΥ</option></select>
              <svg width="12" height="8" viewBox="0 0 12 8"><path d="M1 1L6 6L11 1" fill="none" stroke="#3c4146" stroke-width="2"></path></svg>
            </div>
            <div class="dates">
              ${this.dateField("from", "Ημερομηνία έναρξης", "21/09/2022")}
              ${this.dateField("to", "Ημερομηνία λήξης", "23/09/2022")}
            </div>
          </div>
          <div class="photo latin"><span>Employee<br />Photo Preview</span></div>
        </div>
        <hr class="rule" />
        <section class="section">
          <label for="place">Εισάγετε την προσωρινή διεύθυνση εργασίας του Εργαζομένου και επιβεβαιώστε τη στο χάρτη</label>
          <div class="geo">
            <input id="place" type="text" .value=${"38.01639701394788,23.665898426458746"} />
            <button>Επιβεβαίωση</button>
          </div>
          <p class="quota">( Διαθέσιμες <b class="latin">GMaps Geocoding</b> <sup>[1]</sup> αναζητήσεις για αυτό το μήνα: 1000 )</p>
          <p class="note"><sup>[1]</sup> <b class="latin">GMaps Geocoding:</b> Η <span class="latin">Google Maps Geocoding</span> είναι η υπηρεσία που επιτρέπει την μετατροπή μίας διεύθυνσης σε συντεταγμένες χάρτη</p>
          <work-map></work-map>
        </section>
        <hr />
        <div class="agree">
          <input id="agree" type="checkbox" />
          <label for="agree">Έχω ελέγξει προσεχτικά τις παραπάνω πληροφορίες και λαμβάνω τη πλήρη ευθύνη αυτής της μεταβολής. Είμαι πλήρως ενήμερος ότι η μεταβολή αυτή δε μπορεί να τροποποιηθεί στο μέλλον ή να διαγραφεί. Το όνομα μου θα εμφανίζεται στο σημείο του Υπεύθυνου που την έκανε</label>
        </div>
      </main>
      <div class="scroll" aria-hidden="true">
        <svg width="10" height="10" viewBox="0 0 10 10"><path d="M0 8L5 2L10 8z" fill="#505050"></path></svg>
        <div class="thumb"></div>
        <div class="grow"></div>
        <svg width="10" height="10" viewBox="0 0 10 10"><path d="M0 2L5 8L10 2z" fill="#505050"></path></svg>
      </div>
    </div>`;
  }
}
